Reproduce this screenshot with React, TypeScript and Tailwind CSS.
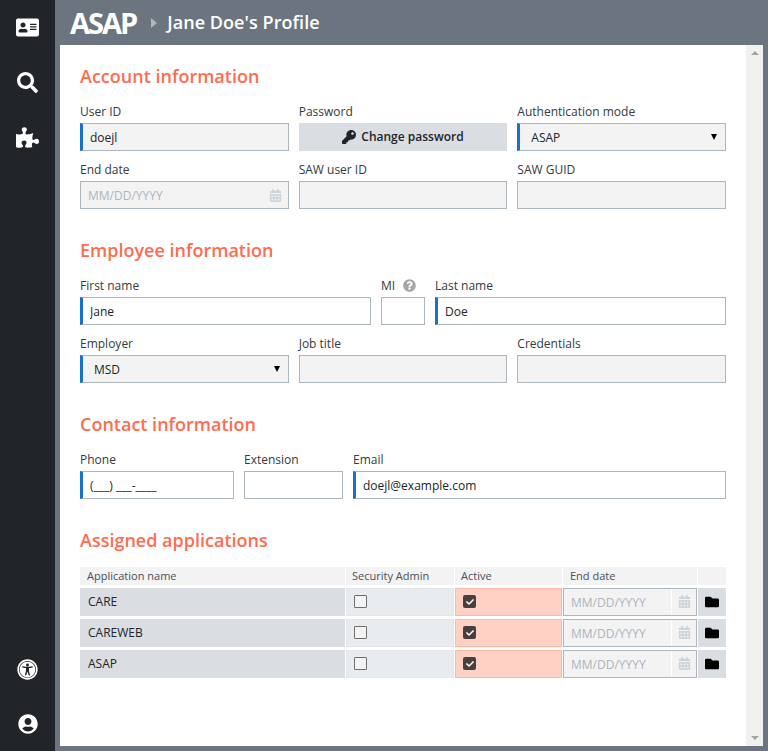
import { ReactNode } from 'react';
import {
  FaAddressCard,
  FaCalendarAlt,
  FaCheck,
  FaFolder,
  FaKey,
  FaPuzzlePiece,
  FaQuestionCircle,
  FaSearch,
  FaUniversalAccess,
  FaUserCircle,
} from 'react-icons/fa';

const Label = ({ children }: { children: ReactNode }) => (
  <div className="h-[20px] text-[12px] leading-[17px] text-[#343a40] whitespace-nowrap">{children}</div>
);

const Heading = ({ children }: { children: ReactNode }) => (
  <h2 className="h-[25px] text-[18px] leading-[25px] font-semibold text-[#ff6c4f] mb-[14px]">{children}</h2>
);

const TextField = ({
  label,
  value = '',
  required,
  disabled,
}: {
  label?: ReactNode;
  value?: string;
  required?: boolean;
  disabled?: boolean;
}) => (
  <div className="min-w-0">
    {label && <Label>{label}</Label>}
    <div
      className={`h-[28px] border border-[#adb5bd] ${required ? 'border-l-[3px] border-l-[#1971c9]' : ''} ${
        disabled ? 'bg-[#f3f3f3]' : 'bg-white'
      }`}
    >
      <input
        readOnly
        value={value}
        className={`w-full h-full bg-transparent text-[12px] text-[#212529] outline-none ${required ? 'pl-[7px]' : 'pl-[8px]'}`}
      />
    </div>
  </div>
);

const SelectField = ({ label, value }: { label: string; value: string }) => (
  <div className="min-w-0">
    <Label>{label}</Label>
    <div className="relative h-[28px] border border-[#adb5bd] border-l-[3px] border-l-[#1971c9] bg-[#f3f3f3]">
      <select className="appearance-none w-full h-full bg-transparent pl-[11px] text-[12px] text-[#212529] outline-none">
        <option>{value}</option>
      </select>
      <span className="absolute right-[8px] top-[10px] w-0 h-0 border-x-[3.5px] border-x-transparent border-t-[6px] border-t-black" />
    </div>
  </div>
);

const DateField = () => (
  <div>
    <Label>End date</Label>
    <div className="flex items-center h-[28px] border border-[#adb5bd] bg-[#f3f3f3] pl-[7px] pr-[6px]">
      <input
        readOnly
        placeholder="MM/DD/YYYY"
        className="flex-1 min-w-0 h-full pt-[1px] bg-transparent text-[12px] placeholder:text-[#adb5bd] outline-none"
      />
      <FaCalendarAlt className="text-[#ced4da] text-[13px]" />
    </div>
  </div>
);

const apps = ['CARE', 'CAREWEB', 'ASAP'];

const AppRow = ({ name }: { name: string }) => (
  <>
    <div className="flex items-center h-[28px] bg-[#dadde1] pl-[8px] text-[12px] text-[#212529]">{name}</div>
    <div className="flex items-center h-[28px] bg-[#e9ecef] border border-[#e2e6ea] pl-[7px] pb-[1px]">
      <span className="block w-[13px] h-[13px] rounded-[1px] border border-[#6f6f6f] bg-[#f3f3f3]" />
    </div>
    <div className="flex items-center h-[28px] bg-[#ffd1c4] border border-[#ffb8a6] pl-[7px] pb-[1px]">
      <span className="flex items-center justify-center w-[13px] h-[13px] rounded-[2px] bg-[#4a3f3f]">
        <FaCheck className="text-white text-[8px]" />
      </span>
    </div>
    <div className="flex h-[28px] border border-[#adb5bd] bg-[#f3f3f3]">
      <input
        readOnly
        placeholder="MM/DD/YYYY"
        className="flex-1 min-w-0 h-full pt-[1px] bg-transparent pl-[7px] text-[12px] placeholder:text-[#adb5bd] outline-none"
      />
      <div className="flex items-center justify-center w-[25px] border-l border-white pb-[1px]">
        <FaCalendarAlt className="text-[#ced4da] text-[13px]" />
      </div>
    </div>
    <div className="flex items-center justify-center h-[28px] bg-[#dadde1]">
      <FaFolder className="text-black text-[14px]" />
    </div>
  </>
);

export default function App() {
  return (
    <div className="flex h-[751px] bg-[#6c757f] font-['Open_Sans',sans-serif] overflow-hidden">
      {/* Sidebar */}
      <div className="flex flex-col items-center w-[55px] bg-[#212529] text-white shrink-0">
        <FaAddressCard className="mt-[16px] text-[23px]" />
        <FaSearch className="mt-[33px] text-[21px]" />
        <FaPuzzlePiece className="mt-[33px] text-[23px]" />
        <FaUniversalAccess className="mt-auto mb-[1px] text-[21px]" />
        <FaUserCircle className="mt-[33px] mb-[17px] text-[20px]" />
      </div>

      <div className="flex flex-col flex-1 min-w-0">
        {/* Header */}
        <div className="flex items-center h-[45px] pl-[15px] text-white">
          <span className="text-[29px] leading-none font-bold tracking-[-2px]">ASAP</span>
          <span className="ml-[15px] w-0 h-0 border-y-[5px] border-y-transparent border-l-[6px] border-l-[#adb5bd]" />
          <span className="ml-[10px] text-[18px] font-semibold tracking-[0.06px]">Jane Doe's Profile</span>
        </div>

        {/* Content panel */}
        <div className="flex ml-[5px] mr-[5px] h-[701px]">
          <div className="flex-1 min-w-0 bg-white pl-[20px] pr-[20px] pt-[19px]">
            <Heading>Account information</Heading>
            <div className="grid grid-cols-3 gap-x-[10px] gap-y-[10px]">
              <TextField label="User ID" value="doejl" required disabled />
              <div>
                <Label>Password</Label>
                <button className="flex items-center justify-center gap-[5px] w-full h-[28px] bg-[#dadde1] text-[12px] font-semibold text-[#212529]">
                  <FaKey className="text-[14px]" />
                  Change password
                </button>
              </div>
              <SelectField label="Authentication mode" value="ASAP" />
              <DateField />
              <TextField label="SAW user ID" disabled />
              <TextField label="SAW GUID" disabled />
            </div>

            <div className="mt-[29px]">
              <Heading>Employee information</Heading>
              <div className="flex gap-[10px] mb-[10px]">
                <div className="w-[291px]">
                  <TextField label="First name" value="Jane" required />
                </div>
                <div className="w-[44px]">
                  <TextField
                    label={
                      <span className="flex items-center gap-[8px]">
                        MI <FaQuestionCircle className="text-[#a6a6a6] text-[13px]" />
                      </span>
                    }
                  />
                </div>
                <div className="flex-1">
                  <TextField label="Last name" value="Doe" required />
                </div>
              </div>
              <div className="grid grid-cols-3 gap-x-[10px]">
                <SelectField label="Employer" value="MSD" />
                <TextField label="Job title" disabled />
                <TextField label="Credentials" disabled />
              </div>
            </div>

            <div className="mt-[29px]">
              <Heading>Contact information</Heading>
              <div className="flex gap-[10px]">
                <div className="w-[154px]">
                  <TextField label="Phone" value="(___) ___-____" required />
                </div>
                <div className="w-[99px]">
                  <TextField label="Extension" />
                </div>
                <div className="flex-1">
                  <TextField label="Email" value="doejl@example.com" required />
                </div>
              </div>
            </div>

            <div className="mt-[29px]">
              <Heading>Assigned applications</Heading>
              <div className="grid grid-cols-[265px_108px_107px_134px_28px] gap-x-[1px] gap-y-[3px]">
                {['Application name', 'Security Admin', 'Active', 'End date', ''].map((h, i) => (
                  <div
                    key={i}
                    className={`h-[18px] bg-[#f3f3f3] text-[11px] leading-[18px] text-[#495057] ${
                      i === 0 || i === 3 ? 'pl-[7px]' : 'pl-[6px]'
                    }`}
                  >
                    {h}
                  </div>
                ))}
                {apps.map((a) => (
                  <AppRow key={a} name={a} />
                ))}
              </div>
            </div>
          </div>

          {/* Scrollbar */}
          <div className="flex flex-col justify-between items-center w-[17px] bg-[#f1f1f1] pt-[6px] pb-[6px]">
            <span className="w-0 h-0 border-x-[4px] border-x-transparent border-b-[4px] border-b-[#a3a3a3]" />
            <span className="w-0 h-0 border-x-[4px] border-x-transparent border-t-[4px] border-t-[#a3a3a3]" />
          </div>
        </div>
      </div>
    </div>
  );
}
